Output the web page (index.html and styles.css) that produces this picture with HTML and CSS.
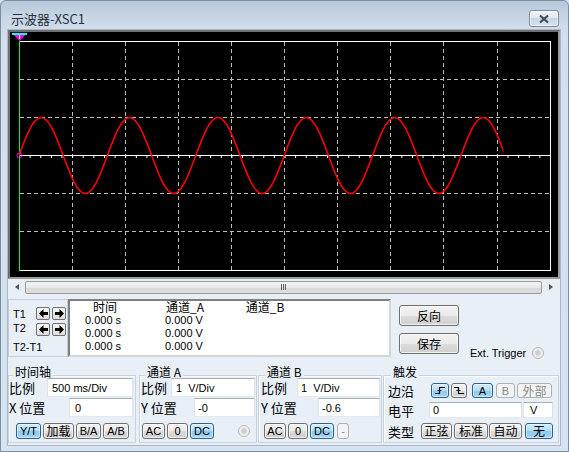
FILE: index.html
```html
<!DOCTYPE html>
<html lang="zh">
<head>
<meta charset="utf-8">
<title>示波器-XSC1</title>
<link rel="stylesheet" href="styles.css">
</head>
<body>
<div class="window">
  <div class="titlebar">
    <span class="title">示波器-XSC1</span>
    <div class="close">
      <svg width="12" height="10" viewBox="0 0 12 10"><path d="M2,1.5 L10,8.5 M10,1.5 L2,8.5"/></svg>
    </div>
  </div>
  <div class="client">
    <div class="scope">
      <svg class="screen" width="548" height="245" viewBox="0 0 548 245">
        <defs><clipPath id="wclip"><rect x="0" y="0" width="493.5" height="245"/></clipPath></defs>
        <g class="dash">
          <line x1="62.5" y1="10" x2="62.5" y2="238"/>
          <line x1="115.5" y1="10" x2="115.5" y2="238"/>
          <line x1="168.5" y1="10" x2="168.5" y2="238"/>
          <line x1="221.5" y1="10" x2="221.5" y2="238"/>
          <line x1="274.5" y1="10" x2="274.5" y2="238"/>
          <line x1="327.5" y1="10" x2="327.5" y2="238"/>
          <line x1="380.5" y1="10" x2="380.5" y2="238"/>
          <line x1="433.5" y1="10" x2="433.5" y2="238"/>
          <line x1="487.5" y1="10" x2="487.5" y2="238"/>
          <line x1="10" y1="47.5" x2="540" y2="47.5"/>
          <line x1="10" y1="85.5" x2="540" y2="85.5"/>
          <line x1="10" y1="161.5" x2="540" y2="161.5"/>
          <line x1="10" y1="199.5" x2="540" y2="199.5"/>
        </g>
        <line class="axis" x1="10" y1="123.5" x2="540" y2="123.5"/>
        <line class="ticks" x1="9" y1="125" x2="540" y2="125"/>
        <rect class="frame" x="9.5" y="9.5" width="531" height="229"/>
        <line class="cur1" x1="9.5" y1="9" x2="9.5" y2="239"/>
        <path class="wave" clip-path="url(#wclip)" d="M9,123.5
          c7.206,-19.46 14.115,-38 22.1,-38 c7.985,0 14.894,18.54 22.1,38 c7.206,19.46 14.115,38 22.1,38 c7.985,0 14.894,-18.54 22.1,-38
          c7.206,-19.46 14.115,-38 22.1,-38 c7.985,0 14.894,18.54 22.1,38 c7.206,19.46 14.115,38 22.1,38 c7.985,0 14.894,-18.54 22.1,-38
          c7.206,-19.46 14.115,-38 22.1,-38 c7.985,0 14.894,18.54 22.1,38 c7.206,19.46 14.115,38 22.1,38 c7.985,0 14.894,-18.54 22.1,-38
          c7.206,-19.46 14.115,-38 22.1,-38 c7.985,0 14.894,18.54 22.1,38 c7.206,19.46 14.115,38 22.1,38 c7.985,0 14.894,-18.54 22.1,-38
          c7.206,-19.46 14.115,-38 22.1,-38 c7.985,0 14.894,18.54 22.1,38 c7.206,19.46 14.115,38 22.1,38 c7.985,0 14.894,-18.54 22.1,-38
          c7.206,-19.46 14.115,-38 22.1,-38 c7.985,0 14.894,18.54 22.1,38"/>
        <circle class="amark" cx="9.5" cy="123.5" r="2.5"/>
        <polygon points="2,1 17,1 9.5,9" fill="#ff00ff"/>
        <rect x="2" y="1" width="15" height="2" fill="#00ffff"/>
        <rect x="9" y="3" width="1" height="4" fill="#ffff66"/>
      </svg>
    </div>

    <div class="hscroll">
      <span class="sb-l"></span>
      <div class="thumb"><span class="grip"></span></div>
      <span class="sb-r"></span>
    </div>

    <div class="readout">
      <div class="cursors">
        <span class="tl">T1</span>
        <span class="ab"><svg width="9" height="9" viewBox="0 0 9 9"><path d="M0,4.5 L4.5,0 V3 H9 V6 H4.5 V9 Z"/></svg></span>
        <span class="ab"><svg width="9" height="9" viewBox="0 0 9 9"><path d="M9,4.5 L4.5,0 V3 H0 V6 H4.5 V9 Z"/></svg></span>
        <span class="tl t2">T2</span>
        <span class="ab"><svg width="9" height="9" viewBox="0 0 9 9"><path d="M0,4.5 L4.5,0 V3 H9 V6 H4.5 V9 Z"/></svg></span>
        <span class="ab"><svg width="9" height="9" viewBox="0 0 9 9"><path d="M9,4.5 L4.5,0 V3 H0 V6 H4.5 V9 Z"/></svg></span>
        <span class="tl t21">T2-T1</span>
      </div>
      <div class="data">
        <span class="th">时间</span><span class="th">通道_A</span><span class="th">通道_B</span>
        <span class="v1">0.000 s</span><span class="v2">0.000 V</span><span></span>
        <span class="v1">0.000 s</span><span class="v2">0.000 V</span><span></span>
        <span class="v1">0.000 s</span><span class="v2">0.000 V</span><span></span>
      </div>
      <div class="btncol">
        <div class="btn zh big">反向</div>
        <div class="btn zh big big2">保存</div>
      </div>
      <div class="ext"><span>Ext. Trigger</span><span class="radio"></span></div>
    </div>

    <div class="controls">
      <div class="grp g-time">
        <span class="lg lg-time">时间轴</span>
        <div class="row"><span class="lbl">比例</span><span class="in tb-scale">500 ms/Div</span></div>
        <div class="row"><span class="lbl">X 位置</span><span class="in tb-pos">0</span></div>
        <div class="brow">
          <span class="btn on tb-yt">Y/T</span>
          <span class="btn zh tb-load">加载</span>
          <span class="btn tb-ba">B/A</span>
          <span class="btn tb-ab">A/B</span>
        </div>
      </div>

      <div class="grp g-a">
        <span class="lg lg-a">通道 A</span>
        <div class="row"><span class="lbl lbl-a">比例</span><span class="in a-scale">1&nbsp; V/Div</span></div>
        <div class="row"><span class="lbl lbl-a">Y 位置</span><span class="in a-pos">-0</span></div>
        <div class="brow">
          <span class="btn a-ac">AC</span>
          <span class="btn a-0">0</span>
          <span class="btn on a-dc">DC</span>
          <span class="radio a-radio"></span>
        </div>
      </div>

      <div class="grp g-b">
        <span class="lg lg-b">通道 B</span>
        <div class="row"><span class="lbl lbl-b">比例</span><span class="in b-scale">1&nbsp; V/Div</span></div>
        <div class="row"><span class="lbl lbl-b">Y 位置</span><span class="in b-pos">-0.6</span></div>
        <div class="brow">
          <span class="btn b-ac">AC</span>
          <span class="btn b-0">0</span>
          <span class="btn on b-dc">DC</span>
          <span class="btn dis b-minus">-</span>
        </div>
      </div>

      <div class="grp g-t">
        <span class="lg lg-t">触发</span>
        <div class="trow tr1">
          <span class="lbl lbl-t">边沿</span>
          <span class="btn on t-rise"><svg width="12" height="11" viewBox="0 0 12 11"><path d="M1,8.5 H5.5 V2.5 H11 M3.5,5.5 H7.5"/></svg></span>
          <span class="btn t-fall"><svg width="12" height="11" viewBox="0 0 12 11"><path d="M1,2.5 H5.5 V8.5 H11 M3.5,5.5 H7.5"/></svg></span>
          <span class="btn on t-a">A</span>
          <span class="btn dis t-b">B</span>
          <span class="btn zh dis t-ext">外部</span>
        </div>
        <div class="trow tr2">
          <span class="lbl lbl-t">电平</span>
          <span class="in t-level">0</span>
          <span class="in t-unit">V</span>
        </div>
        <div class="trow tr3">
          <span class="lbl lbl-t">类型</span>
          <span class="btn zh t-sine">正弦</span>
          <span class="btn zh t-norm">标准</span>
          <span class="btn zh t-auto">自动</span>
          <span class="btn zh on t-none">无</span>
        </div>
      </div>
    </div>
  </div>
</div>
</body>
</html>
```

FILE: styles.css
```css
* { box-sizing: border-box; }
html, body { margin: 0; padding: 0; }
body {
  width: 569px; height: 452px; overflow: hidden;
  background: #d7e3f0;
  font-family: "Liberation Sans", "Noto Sans CJK SC", sans-serif;
  font-size: 11px; color: #000;
}
.window {
  width: 569px; height: 452px;
  border: 1px solid #7c8ca1; border-radius: 6px 6px 0 0;
  padding: 0 7px 5px 6px;
  background: linear-gradient(180deg, #b8c8da 0, #c9d7e6 18px, #d3dfec 36px, #d7e3f0 100%);
  display: flex; flex-direction: column;
}
.titlebar { height: 28px; flex: none; display: flex; align-items: center; padding: 7px 2px 0 4px; }
.title { flex: 1; font-family: "Noto Sans CJK SC", sans-serif; font-size: 13px; line-height: 16px; color: #26323f; }
.close {
  width: 30px; height: 17px; border: 1px solid #7f8ea3; border-radius: 3px;
  background: linear-gradient(180deg, #f3f6fa 0, #dfe7f0 45%, #cbd7e5 50%, #d9e3ee 100%);
  box-shadow: inset 0 0 0 1px rgba(255,255,255,.55);
  display: flex; align-items: center; justify-content: center;
}
.close svg path { stroke: #3a495c; stroke-width: 2.2; fill: none; }
.client { flex: 1; border: 1px solid #a9b7c7; background: #e8eff7; display: flex; flex-direction: column; }

.scope { height: 249px; flex: none; border: 2px solid; border-color: #707070 #9c9c9c #9c9c9c #707070; background: #000; }
.screen { display: block; }
.dash line { stroke: #bdbdbd; stroke-width: 1; stroke-dasharray: 4 3; }
.axis { stroke: #fff; stroke-width: 1; }
.ticks { stroke: #fff; stroke-width: 2; stroke-dasharray: 1 9.62; }
.frame { fill: none; stroke: #fff; stroke-width: 1; }
.cur1 { stroke: #00ff00; stroke-width: 1; }
.wave { fill: none; stroke: #ff0000; stroke-width: 1.6; }
.amark { fill: none; stroke: #ff00ff; stroke-width: 1; }

.hscroll { height: 14px; margin-top: 1px; flex: none; display: flex; align-items: center; }
.sb-l { width: 17px; height: 14px; display: flex; align-items: center; justify-content: center; }
.sb-r { flex: 1; height: 14px; display: flex; align-items: center; justify-content: center; }
.sb-l::before { content: ""; border-style: solid; border-width: 3.5px 4px 3.5px 0; border-color: transparent #555 transparent transparent; }
.sb-r::before { content: ""; border-style: solid; border-width: 3.5px 0 3.5px 4px; border-color: transparent transparent transparent #555; }
.thumb {
  width: 517px; height: 13px; border: 1px solid #9a9a9a; border-radius: 2px;
  background: linear-gradient(180deg, #f6f6f6, #e8e8e8 50%, #d8d8d8 51%, #dedede);
  display: flex; align-items: center; justify-content: center;
}
.grip { width: 5px; height: 6px; background: linear-gradient(90deg, #606060 1px, transparent 1px) 0 0 / 2px 6px repeat-x; }

.readout { display: flex; height: 58px; margin-top: 5px; flex: none; }
.cursors {
  width: 60px; height: 58px; border: 1px solid #c3ccd6;
  display: grid; grid-template-columns: 21px 14px 14px; grid-template-rows: 13px 13px 14px;
  column-gap: 2px; row-gap: 3px; padding: 7px 0 0 4px; align-items: center; align-content: start;
}
.tl { font-size: 11px; line-height: 12px; }
.t2 { margin-top: -4px; }
.t21 { grid-column: 1 / -1; margin-top: 2px; }
.ab {
  width: 14px; height: 13px; border: 1px solid #707070; border-radius: 2px;
  background: linear-gradient(#f6f6f6, #dedede);
  display: flex; align-items: center; justify-content: center;
}
.ab svg { fill: #000; display: block; }
.data {
  width: 323px; height: 58px; background: #fff;
  border: 2px solid; border-color: #7f7f7f #d6d6d6 #d6d6d6 #7f7f7f;
  display: grid; grid-template-columns: 70px 90px 70px; grid-template-rows: 12px 14px 13px 13px; align-items: center;
}
.th { font-family: "Noto Sans CJK SC", sans-serif; font-size: 12px; line-height: 12px; text-align: center; }
.v1 { padding-left: 15px; line-height: 13px; }
.v2 { padding-left: 25px; line-height: 13px; }
.btncol { margin-left: 8px; width: 60px; display: flex; flex-direction: column; }
.ext { margin-left: 11px; margin-top: 47px; height: 14px; display: flex; align-items: center; font-size: 11px; }
.radio {
  width: 12px; height: 12px; border-radius: 50%; border: 1px solid #b5b5b5; flex: none;
  background: radial-gradient(circle, #cdcdcd 0 2px, #e6e6e6 3px, #f6f6f6 5px);
  margin-left: 6px;
}

.btn {
  height: 16px; border: 1px solid #707070; border-radius: 3px; flex: none;
  background: linear-gradient(180deg, #f2f2f2, #ebebeb 50%, #dddddd 51%, #cfcfcf);
  box-shadow: inset 0 0 0 1px rgba(255,255,255,.7);
  display: flex; align-items: center; justify-content: center;
  font-size: 11px; line-height: 12px; color: #000;
}
.btn.zh { font-family: "Noto Sans CJK SC", sans-serif; font-size: 12px; }
.btn.on {
  border-color: #2c628b;
  background: linear-gradient(180deg, #d4eefb, #b1dcf4 50%, #8ec9ec 51%, #a4d6f2);
  box-shadow: inset 0 0 0 1px rgba(255,255,255,.45);
}
.btn.dis { border-color: #adb2b5; background: #f4f4f4; box-shadow: none; color: #8a8a8a; }
.btn svg path { fill: none; stroke: #000; stroke-width: 1.2; }
.big { height: 21px; width: 60px; margin-top: 6px; }
.big2 { margin-top: 7px; }

.controls { display: flex; margin-top: 8px; flex: none; align-items: flex-start; }
.grp {
  height: 68px; margin-top: 10px; border: 1px solid #c9d3dd;
  box-shadow: inset 1px 1px 0 #fbfdff;
  display: flex; flex-direction: column;
}
.g-time { width: 128px; padding-right: 2px; }
.g-a { width: 118px; margin-left: 3px; padding-right: 1px; }
.g-b { width: 124px; margin-left: 1px; padding-right: 1px; }
.g-t { width: 176px; margin-left: 1px; }
.lg {
  display: block; align-self: flex-start; margin: -10px 0 1px 4px; padding: 0 2px;
  background: #e8eff7; font-family: "Noto Sans CJK SC", sans-serif; font-size: 12px; line-height: 11px; height: 11px;
}
.lg-a { margin-left: 5px; }
.lg-b { margin-left: 6px; }
.lg-t { margin-left: 7px; }
.row { display: flex; align-items: center; height: 19px; flex: none; }
.row + .row { margin-top: 1px; }
.lbl { font-family: "Noto Sans CJK SC", sans-serif; font-size: 13px; line-height: 13px; white-space: nowrap; }
.lbl-a { margin-left: 1px; }
.lbl-b { margin-left: 2px; }
.lbl-t { margin-left: 4px; width: 26px; }
.in {
  height: 19px; background: #fff; border: 1px solid; border-color: #abadb3 #dbdfe6 #e3e9ef #e2e3ea;
  margin-left: auto; display: flex; align-items: center; font-size: 11px; white-space: nowrap; flex: none;
}
.tb-scale { width: 86px; padding-left: 4px; }
.tb-pos { width: 64px; padding-left: 5px; }
.a-scale { width: 84px; padding-left: 4px; }
.a-pos { width: 61px; padding-left: 3px; }
.b-scale { width: 83px; padding-left: 3px; }
.b-pos { width: 62px; padding-left: 3px; }
.brow { display: flex; height: 16px; margin-top: 6px; align-items: center; flex: none; }
.tb-yt { width: 25px; margin-left: 7px; }
.tb-load { width: 31px; margin-left: 2px; }
.tb-ba { width: 25px; margin-left: 2px; }
.tb-ab { width: 26px; margin-left: 2px; }
.a-ac { width: 23px; margin-left: 2px; }
.a-0 { width: 21px; margin-left: 2px; }
.a-dc { width: 24px; margin-left: 2px; }
.a-radio { margin-left: 24px; }
.b-ac { width: 22px; margin-left: 5px; }
.b-0 { width: 20px; margin-left: 2px; }
.b-dc { width: 24px; margin-left: 2px; }
.b-minus { width: 12px; margin-left: 3px; }
.trow { display: flex; align-items: center; flex: none; }
.tr1 { height: 15px; margin-top: 5px; }
.tr2 { height: 16px; margin-top: 4px; }
.tr3 { height: 16px; margin-top: 5px; }
.tr1 .btn { height: 15px; }
.t-rise { width: 18px; margin-left: 17px; }
.t-fall { width: 16px; margin-left: 2px; }
.t-a { width: 21px; margin-left: 5px; }
.t-b { width: 19px; margin-left: 3px; }
.t-ext { width: 35px; margin-left: 2px; }
.tr2 .in { height: 16px; margin-left: 0; }
.tr2 .t-level { width: 93px; margin-left: 15px; padding-left: 3px; }
.tr2 .t-unit { width: 30px; margin-left: 1px; padding-left: 6px; }
.t-sine { width: 31px; margin-left: 7px; }
.t-norm { width: 34px; margin-left: 2px; }
.t-auto { width: 33px; margin-left: 1px; }
.t-none { width: 28px; margin-left: 3px; }
```
